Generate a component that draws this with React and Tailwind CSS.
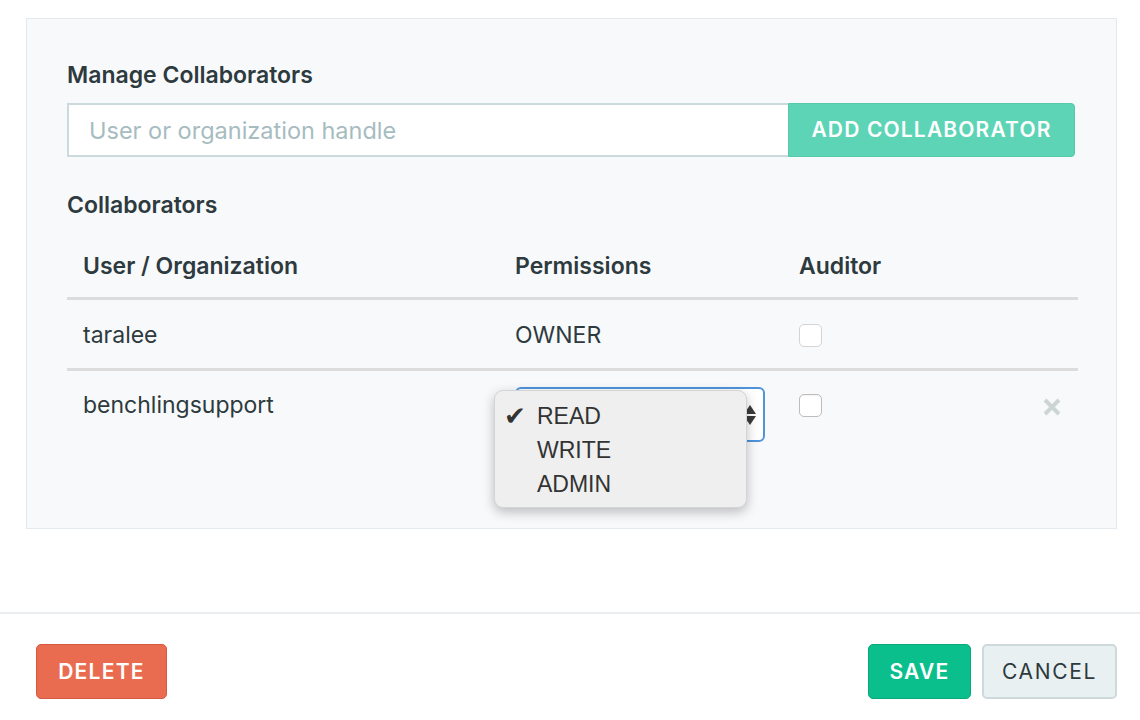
import React from 'react';

const CheckBox = ({ light }) => (
  <div
    className={
      light
        ? 'w-[23px] h-[23px] rounded-[5px] border border-[#d4d4d4] bg-white'
        : 'w-[23px] h-[23px] rounded-[5px] border border-[#bdbdbd] bg-white shadow-[inset_0_1px_1px_rgba(0,0,0,0.05)]'
    }
  />
);

const App = () => {
  return (
    <div className="w-full h-[720px] bg-white font-['Inter',sans-serif] text-[#2d3a3e]">
      {/* Collaborators panel */}
      <div className="ml-[26px] mr-[23px] mt-[18px] h-[511px] border border-[#e3e9ed] bg-[#f8f9fb] pl-[40px] pr-[41px] pt-[42px]">
        <h2 className="text-[23px] leading-[28px] font-semibold">Manage Collaborators</h2>

        <div className="mt-[14px] flex h-[54px]">
          <input
            type="text"
            placeholder="User or organization handle"
            className="flex-1 h-full bg-white border-2 border-r-0 border-[#cbdadc] px-[20px] text-[23.5px] outline-none placeholder:text-[#a6bcbf]"
          />
          <button className="w-[287px] h-full bg-[#5cd4b5] border border-[#55c9aa] rounded-r-[4px] text-white text-[21px] font-semibold tracking-[0.055em]">
            ADD COLLABORATOR
          </button>
        </div>

        <h3 className="mt-[34px] text-[23px] leading-[28px] font-semibold">Collaborators</h3>

        <div className="-mr-[3px]">
          {/* Header */}
          <div className="flex pt-[33px] pb-[17px] border-b-[3px] border-[#dcdcdc] text-[23px] leading-[28px] font-semibold">
            <div className="w-[432px] pl-4">User / Organization</div>
            <div className="w-[284px] pl-4">Permissions</div>
            <div className="flex-1 pl-4">Auditor</div>
          </div>

          {/* Row 1 */}
          <div className="flex items-center h-[71px] pt-[2px] border-b-[3px] border-[#dcdcdc] text-[23px] leading-[28px]">
            <div className="w-[432px] pl-4">taralee</div>
            <div className="w-[284px] pl-4">OWNER</div>
            <div className="flex-1 pl-4">
              <CheckBox light />
            </div>
          </div>

          {/* Row 2 */}
          <div className="flex items-start pt-[16px] text-[23px]">
            <div className="w-[432px] pl-4 pt-[4px] leading-[28px]">benchlingsupport</div>
            <div className="w-[284px] pl-4">
              <div className="relative w-[250px] h-[55px] rounded-[6px] border-2 border-[#4f93dc] bg-white">
                <div className="absolute right-[7px] top-[16px] flex flex-col items-center gap-[2px]">
                  <div className="w-0 h-0 border-l-[6px] border-r-[6px] border-b-[9px] border-l-transparent border-r-transparent border-b-[#3b3b3b]" />
                  <div className="w-0 h-0 border-l-[6px] border-r-[6px] border-t-[9px] border-l-transparent border-r-transparent border-t-[#3b3b3b]" />
                </div>
                {/* Open options menu */}
                <div className="absolute left-[-23px] top-[1px] w-[253px] h-[118px] rounded-[9px] bg-[#efefef] border border-[#d4d4d4] shadow-[0_4px_12px_rgba(0,0,0,0.25)] pt-[8px] font-['Liberation_Sans',sans-serif] text-[23px] leading-[34px] text-[#333]">
                  <div className="flex items-center">
                    <span className="w-[42px] pl-[9px] text-[26px] leading-[34px] font-['DejaVu_Sans',sans-serif]">✔</span>
                    <span>READ</span>
                  </div>
                  <div className="pl-[42px]">WRITE</div>
                  <div className="pl-[42px]">ADMIN</div>
                </div>
              </div>
            </div>
            <div className="flex-1 pl-4 pt-[7px] flex items-start justify-between pr-[17px]">
              <CheckBox />
              <svg width="18" height="18" viewBox="0 0 18 18" className="mt-[4px]">
                <path d="M2 2L16 16M16 2L2 16" stroke="#cdd4d4" strokeWidth="4" />
              </svg>
            </div>
          </div>
        </div>
      </div>

      {/* Footer */}
      <div className="mt-[83px] border-t-2 border-[#e9edf0] flex items-start justify-between pt-[30px] pl-[36px] pr-[23px]">
        <button className="w-[131px] h-[55px] rounded-[5px] bg-[#e96c51] border border-[#d65a40] text-white text-[21px] font-semibold tracking-[0.06em]">
          DELETE
        </button>
        <div className="flex gap-[11px]">
          <button className="w-[103px] h-[55px] rounded-[5px] bg-[#0bbf8c] border border-[#0aa97b] text-white text-[21px] font-semibold tracking-[0.06em]">
            SAVE
          </button>
          <button className="w-[135px] h-[55px] rounded-[5px] bg-[#e9f0f1] border-2 border-[#cdd9db] text-[#2d3a3e] text-[21px] tracking-[0.08em]">
            CANCEL
          </button>
        </div>
      </div>
    </div>
  );
};

export default App;
